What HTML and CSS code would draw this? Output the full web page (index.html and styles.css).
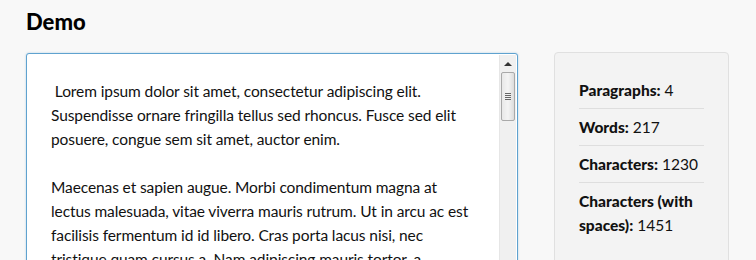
FILE: index.html
```html
<!DOCTYPE html>
<html lang="en">
<head>
    <meta charset="UTF-8">
    <meta name="viewport" content="width=device-width, initial-scale=1.0">
    <title>Demo</title>
    <link rel="stylesheet" href="styles.css">
</head>
<body>
    <div class="page">
        <h1 class="title">Demo</h1>

        <div class="layout">
            <div class="editor">
                <div class="editor-text">
                    <p>&nbsp;Lorem ipsum dolor sit amet, consectetur adipiscing elit. Suspendisse ornare fringilla tellus sed rhoncus. Fusce sed elit posuere, congue sem sit amet, auctor enim.</p>
                    <p>Maecenas et sapien augue. Morbi condimentum magna at lectus malesuada, vitae viverra mauris rutrum. Ut in arcu ac est facilisis fermentum id id libero. Cras porta lacus nisi, nec tristique quam cursus a. Nam adipiscing mauris tortor, a.</p>
                </div>
                <div class="scrollbar">
                    <div class="scroll-arrow"></div>
                    <div class="scroll-thumb">
                        <span></span><span></span><span></span><span></span>
                    </div>
                </div>
            </div>

            <div class="stats">
                <ul>
                    <li><strong>Paragraphs:</strong> 4</li>
                    <li><strong>Words:</strong> 217</li>
                    <li><strong>Characters:</strong> 1230</li>
                    <li><strong>Characters (with spaces):</strong> 1451</li>
                </ul>
            </div>
        </div>
    </div>
</body>
</html>
```

FILE: styles.css
```css
body {
    margin: 0;
    background: #f8f8f8;
    font-family: "Source Sans Pro", Lato, "Noto Sans", sans-serif;
    color: #111;
    overflow: hidden;
}

.page {
    padding: 8px 26px 0 26px;
}

.title {
    font-size: 22px;
    font-weight: 900;
    margin: 0 0 17px 0;
    line-height: 28px;
    color: #000;
}

.layout {
    display: flex;
    align-items: flex-start;
    gap: 36px;
}

/* text box with the old style scrollbar */
.editor {
    width: 490px;
    height: 260px;
    display: flex;
    background: #fff;
    border: 1px solid #5fa2cf;
    border-radius: 3px;
    box-shadow: 0 0 2px rgba(95, 162, 207, 0.5);
    flex-shrink: 0;
}

.editor-text {
    flex: 1;
    padding: 25px 20px 0 24px;
    font-size: 15.5px;
    letter-spacing: -0.1px;
    line-height: 24px;
    color: #111;
}

.editor-text p {
    margin: 0 0 24px 0;
}

.scrollbar {
    width: 16px;
    margin: 1px 1px 0 0;
    background: #f0f0f0;
    border-left: 1px solid #e6e6e6;
}

.scroll-arrow {
    width: 0;
    height: 0;
    margin: 7px auto 6px auto;
    border-left: 4px solid transparent;
    border-right: 4px solid transparent;
    border-bottom: 4px solid #333;
}

.scroll-thumb {
    height: 47px;
    margin: 0 1px;
    border: 1px solid #a9a9a9;
    border-radius: 2px;
    background: linear-gradient(to right, #e8e8e8, #f4f4f4 50%, #dcdcdc);
    display: flex;
    flex-direction: column;
    align-items: center;
    justify-content: center;
    gap: 1px;
}

.scroll-thumb span {
    width: 6px;
    height: 1px;
    background: #666;
}

.stats {
    width: 125px;
    background: #f3f3f3;
    border: 1px solid #e0e0e0;
    border-radius: 4px;
    padding: 19px 24px 30px 24px;
    margin-top: -1px;
}

.stats ul {
    list-style: none;
    margin: 0;
    padding: 0;
    font-size: 15.5px;
    line-height: 24px;
}

.stats li {
    padding: 6px 0;
    border-bottom: 1px solid #dedede;
}

.stats li:last-child {
    border-bottom: none;
}

.stats strong {
    font-weight: 900;
}
```
